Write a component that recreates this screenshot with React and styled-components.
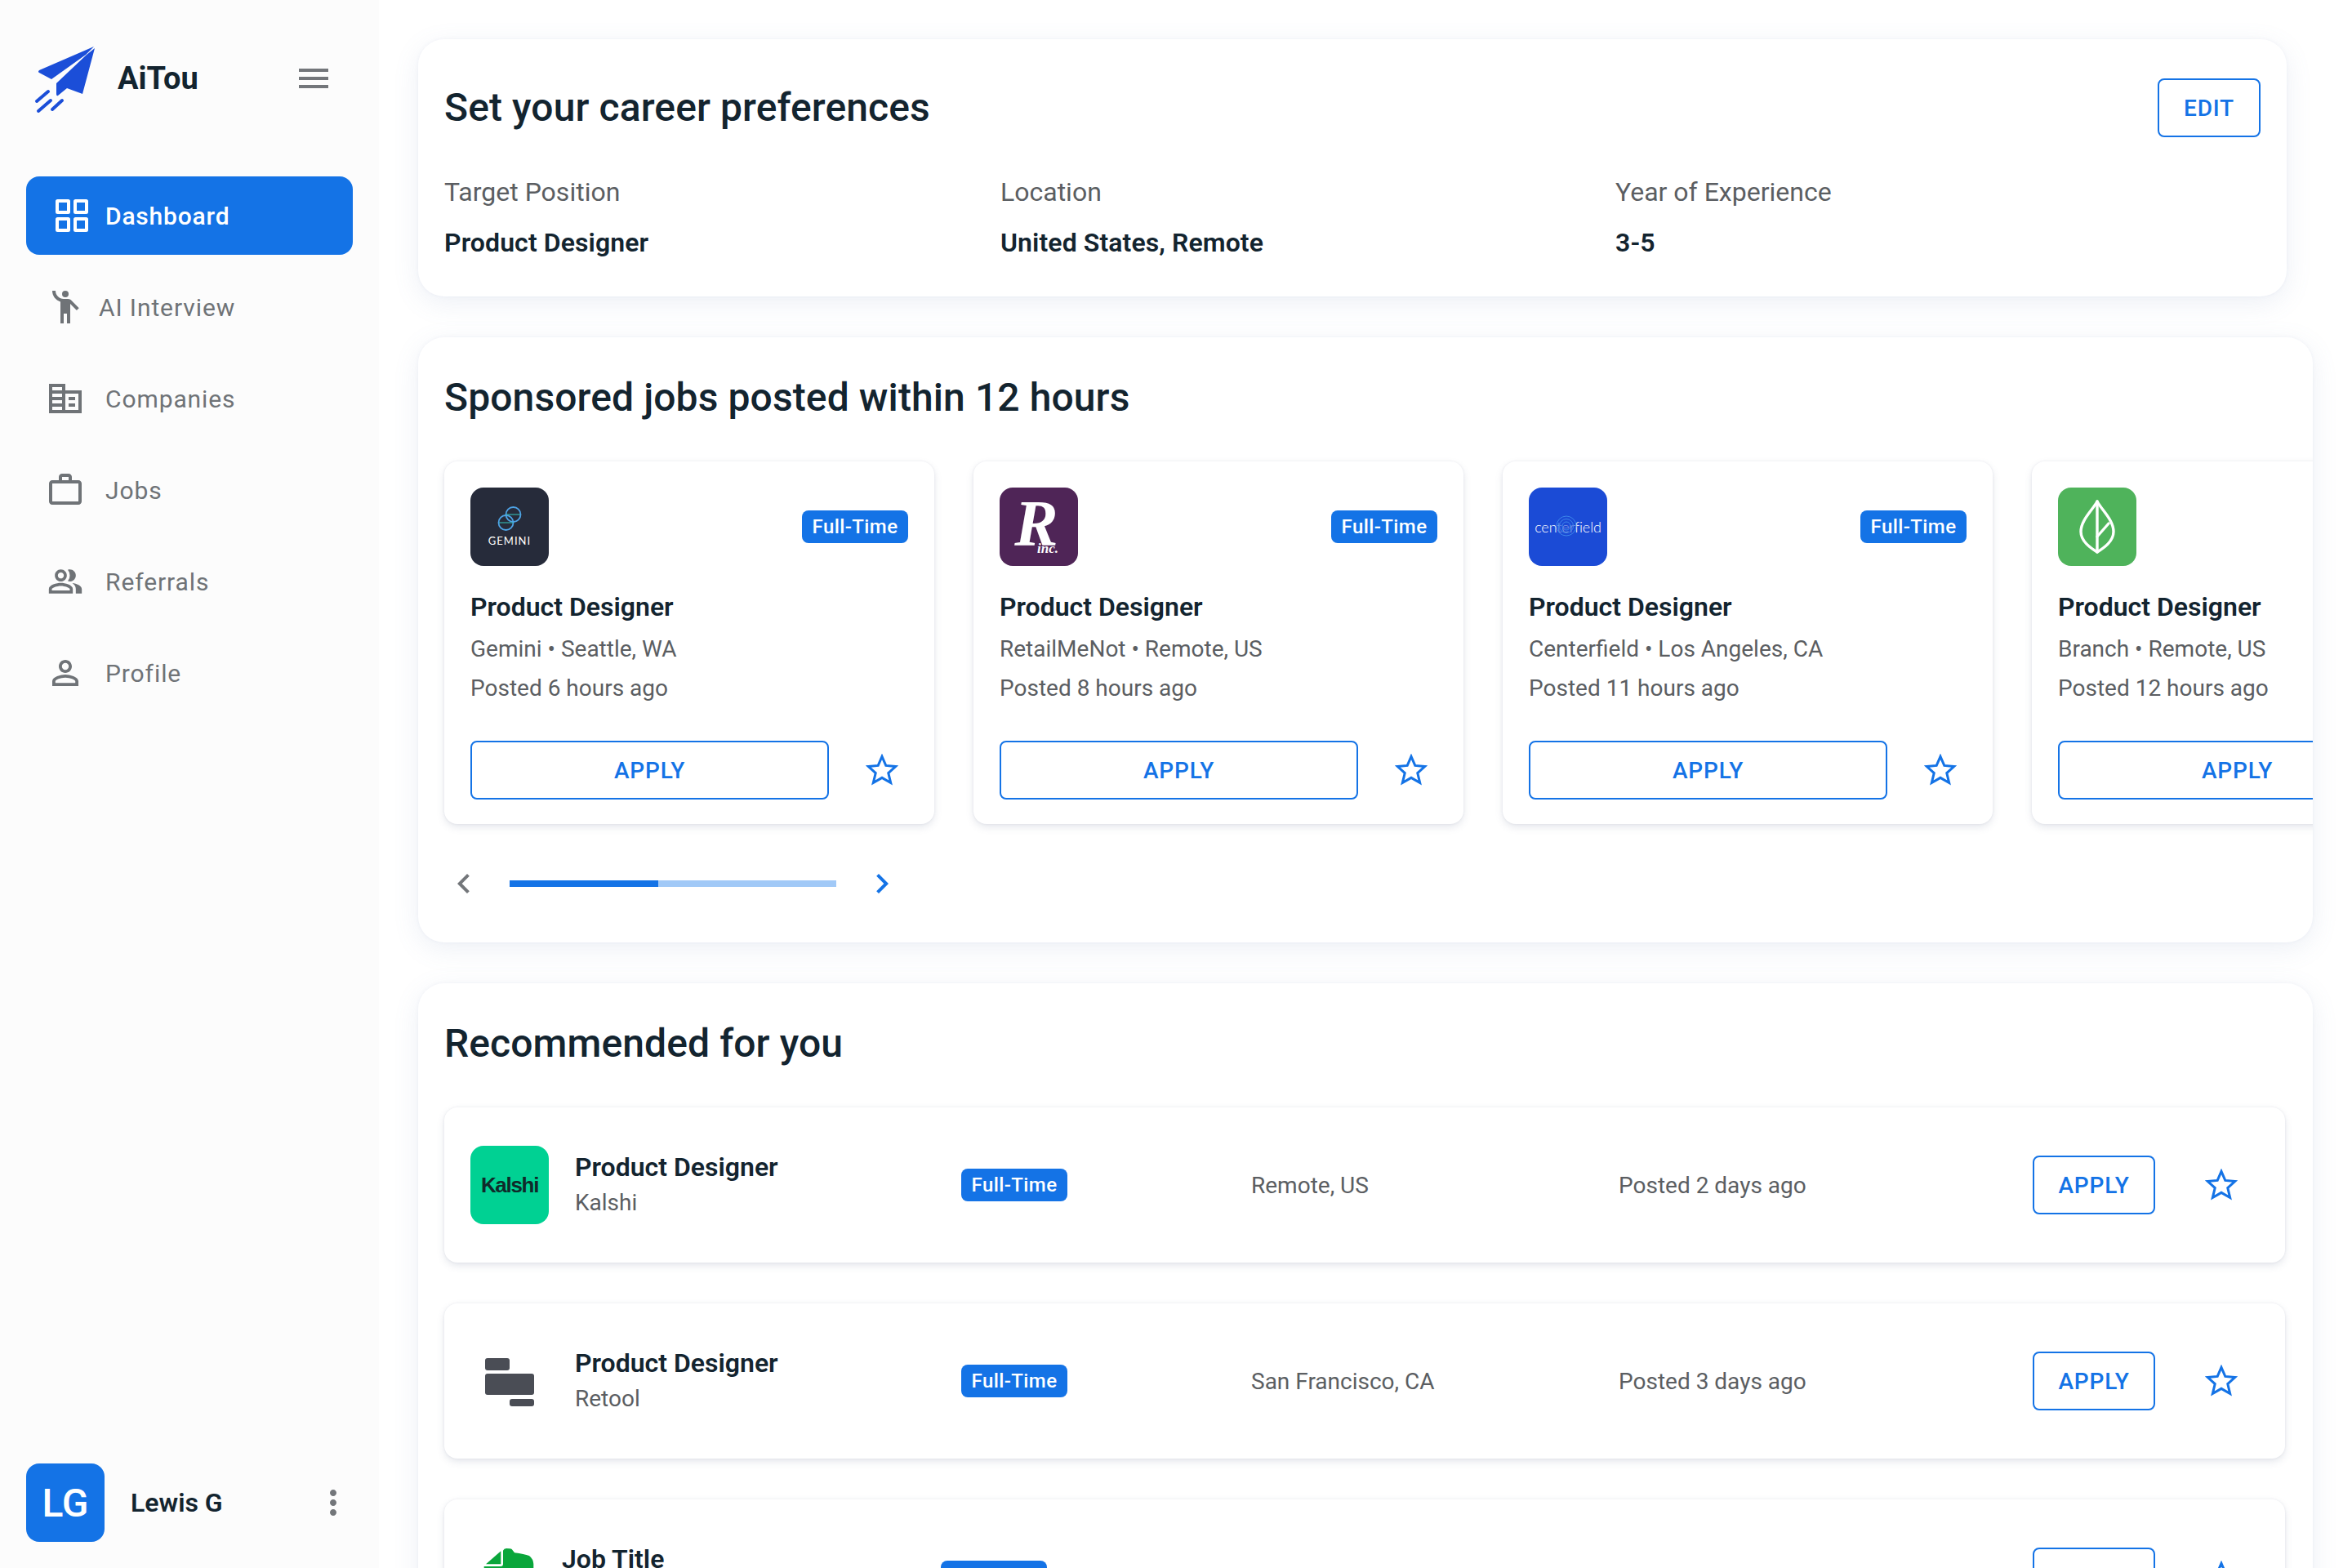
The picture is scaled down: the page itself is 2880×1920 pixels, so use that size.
import React from 'react'
import styled, { createGlobalStyle } from 'styled-components'
import { MdMenu, MdEmojiPeople, MdOutlineWorkOutline, MdOutlinePeopleAlt, MdPersonOutline, MdChevronLeft, MdChevronRight, MdMoreVert } from 'react-icons/md'

const BLUE = '#1473e6'
const INK = '#13242f'
const MUTED = '#5b5e62'

const GlobalStyle = createGlobalStyle`
  html, body { margin: 0; padding: 0; background: #fff; }
  body { font-family: Roboto, "Liberation Sans", sans-serif; color: ${INK}; overflow: hidden; }
  * { box-sizing: border-box; }
`

function PlaneLogo() {
  return (
    <svg width="80" height="90" viewBox="40 50 80 90" fill="#1b4ed8">
      <path d="M115 56 L48 85 Q46 87 48 88 L63 96 L105 66 Z" strokeLinejoin="round" />
      <path d="M116 58 L101 114 L82 107 L71 116 Q69 117 69 114 L69 101 L106 66 Z" />
      <g stroke="#1b4ed8" strokeWidth="4" strokeLinecap="round">
        <path d="M45 123 L59 111" />
        <path d="M47 135 L62 122" />
        <path d="M64 133 L76 122" />
      </g>
    </svg>
  )
}

function GridIcon() {
  return (
    <svg width="40" height="40" viewBox="0 0 40 40" fill="none" stroke="#fff" strokeWidth="4">
      <rect x="2" y="2" width="14" height="14" rx="0.5" />
      <rect x="24" y="2" width="14" height="14" rx="0.5" />
      <rect x="2" y="24" width="14" height="14" rx="0.5" />
      <rect x="24" y="24" width="14" height="14" rx="0.5" />
    </svg>
  )
}

function CompanyIcon() {
  return (
    <svg width="48" height="48" viewBox="0 0 24 24" fill="currentColor">
      <path fillRule="evenodd" d="M2 3h10v4h10v14H2z M4 5h6v2H4z M4 9h6v2H4z M4 13h6v2H4z M4 17h6v2H4z M12 9h8v10h-8z" />
      <rect x="14" y="11" width="4" height="2" />
      <rect x="14" y="15" width="4" height="2" />
    </svg>
  )
}

function StarIcon() {
  return (
    <svg width="40" height="40" viewBox="2 2 36 36" fill="none" stroke={BLUE} strokeWidth="2.7">
      <path d="M20 5 L24.3 15 L35 16 L27 23.2 L29.6 34 L20 28.4 L10.4 34 L13 23.2 L5 16 L15.7 15 Z" />
    </svg>
  )
}

function GeminiLogo() {
  return (
    <LogoBox $bg="#262b3a">
      <svg width="30" height="30" viewBox="0 0 30 30" fill="none" stroke="#4ea3e6" strokeWidth="1.8">
        <circle cx="19.5" cy="10" r="9" />
        <circle cx="10.5" cy="20" r="9" />
        <path d="M10.5 10 H28" stroke="#35c9c0" strokeWidth="1.2" />
        <path d="M2 20 H19.5" stroke="#35c9c0" strokeWidth="1.2" />
      </svg>
      <GeminiName>GEMINI</GeminiName>
    </LogoBox>
  )
}

function RetailLogo() {
  return (
    <LogoBox $bg="#4f2557">
      <RetailMark>R</RetailMark>
      <RetailInc>inc.</RetailInc>
    </LogoBox>
  )
}

function CenterfieldLogo() {
  return (
    <LogoBox $bg="#1b4bd6">
      <CenterName>centerfield</CenterName>
      <CenterRings width="26" height="26" viewBox="0 0 26 26" fill="none" stroke="#3d86ea" strokeWidth="1">
        <circle cx="13" cy="13" r="12" fill="#1b4bd6" fillOpacity="0.55" />
        <circle cx="13" cy="13" r="8.5" />
        <circle cx="13" cy="13" r="5" />
      </CenterRings>
    </LogoBox>
  )
}

function BranchLogo() {
  return (
    <LogoBox $bg="#4fb35b">
      <svg width="96" height="96" viewBox="0 0 96 96" fill="none" stroke="#fff" strokeWidth="3.4" strokeLinejoin="round" strokeLinecap="round">
        <path d="M48 17 C54 28 68 40 68 54 C68 66 56 74 48 79 C40 74 28 66 28 54 C28 40 42 28 48 17 Z" />
        <path d="M48 17 V79" />
        <path d="M48 60 L62 44" />
      </svg>
    </LogoBox>
  )
}

function KalshiLogo() {
  return (
    <LogoBox $bg="#00d193">
      <KalshiName>Kalshi</KalshiName>
    </LogoBox>
  )
}

function RetoolLogo() {
  return (
    <LogoBox>
      <svg width="96" height="96" viewBox="0 0 96 96" fill="#4a4d55">
        <rect x="18" y="20" width="30" height="15" rx="3" />
        <rect x="18" y="39" width="60" height="26" rx="3" />
        <rect x="48" y="70" width="30" height="9" rx="3" />
      </svg>
    </LogoBox>
  )
}

function LeafLogo() {
  return (
    <LogoBox $width={80}>
      <svg width="80" height="96" viewBox="0 0 80 96" fill="#0aa63b">
        <path d="M37.3 16.3 L37.3 32.3 L19 32.3 Z" />
        <path d="M40 15.7 Q41 13 44 13 Q49 13 50.7 14 L54 18.3 Q66 20 72 22 Q77 26 77.3 32 L77.3 90 L16 90 L16.7 35 L37 35 Q40 35 40 32 Z" />
      </svg>
    </LogoBox>
  )
}

const navItems = [
  { label: 'AI Interview', icon: <MdEmojiPeople size={48} />, gap: 17 },
  { label: 'Companies', icon: <CompanyIcon />, gap: 25 },
  { label: 'Jobs', icon: <MdOutlineWorkOutline size={48} />, gap: 25 },
  { label: 'Referrals', icon: <MdOutlinePeopleAlt size={44} />, gap: 25 },
  { label: 'Profile', icon: <MdPersonOutline size={48} />, gap: 25 },
]

const sponsored = [
  { company: 'Gemini', place: 'Seattle, WA', posted: 'Posted 6 hours ago', logo: <GeminiLogo /> },
  { company: 'RetailMeNot', place: 'Remote, US', posted: 'Posted 8 hours ago', logo: <RetailLogo /> },
  { company: 'Centerfield', place: 'Los Angeles, CA', posted: 'Posted 11 hours ago', logo: <CenterfieldLogo /> },
  { company: 'Branch', place: 'Remote, US', posted: 'Posted 12 hours ago', logo: <BranchLogo /> },
]

const recommended = [
  { title: 'Product Designer', company: 'Kalshi', place: 'Remote, US', posted: 'Posted 2 days ago', logo: <KalshiLogo /> },
  { title: 'Product Designer', company: 'Retool', place: 'San Francisco, CA', posted: 'Posted 3 days ago', logo: <RetoolLogo /> },
  { title: 'Job Title', company: 'Company', place: 'Location', posted: 'Posted 4 days ago', logo: <LeafLogo />, compact: true },
]

export default function App() {
  return (
    <Page>
      <GlobalStyle />
      <Sidebar>
        <Brand>
          <BrandMark>
            <PlaneLogo />
            <BrandName>AiTou</BrandName>
          </BrandMark>
          <MenuButton><MdMenu size={48} /></MenuButton>
        </Brand>
        <ActiveNav>
          <GridIcon />
          <span>Dashboard</span>
        </ActiveNav>
        <NavList>
          {navItems.map((item) => (
            <NavItem key={item.label} $gap={item.gap}>
              <IconSlot>{item.icon}</IconSlot>
              <span>{item.label}</span>
            </NavItem>
          ))}
        </NavList>
        <UserBar>
          <Avatar>LG</Avatar>
          <UserName>Lewis G</UserName>
          <MoreButton><MdMoreVert size={48} /></MoreButton>
        </UserBar>
      </Sidebar>

      <Main>
        <PrefCard>
          <PrefHeader>
            <SectionTitle>Set your career preferences</SectionTitle>
            <EditButton>EDIT</EditButton>
          </PrefHeader>
          <PrefGrid>
            <PrefLabel>Target Position</PrefLabel>
            <PrefLabel>Location</PrefLabel>
            <PrefLabel>Year of Experience</PrefLabel>
            <PrefValue>Product Designer</PrefValue>
            <PrefValue>United States, Remote</PrefValue>
            <PrefValue>3-5</PrefValue>
          </PrefGrid>
        </PrefCard>

        <Card>
          <CardTitle>Sponsored jobs posted within 12 hours</CardTitle>
          <JobStrip>
            {sponsored.map((job) => (
              <JobCard key={job.company}>
                <JobTop>
                  {job.logo}
                  <Badge>Full-Time</Badge>
                </JobTop>
                <JobTitle>Product Designer</JobTitle>
                <JobMeta>{job.company} • {job.place}</JobMeta>
                <JobMeta>{job.posted}</JobMeta>
                <JobActions>
                  <WideApply>APPLY</WideApply>
                  <StarSlot><StarIcon /></StarSlot>
                </JobActions>
              </JobCard>
            ))}
          </JobStrip>
          <Pager>
            <PagerArrow $active={false}><MdChevronLeft size={48} /></PagerArrow>
            <PagerTrack><PagerFill style={{ width: '45.5%' }} /></PagerTrack>
            <PagerArrow $active><MdChevronRight size={48} /></PagerArrow>
          </Pager>
        </Card>

        <Card>
          <CardTitle>Recommended for you</CardTitle>
          <RowList>
            {recommended.map((job) => (
              <JobRow key={job.company} $compact={job.compact}>
                {job.logo}
                <RowInfo>
                  <JobTitle as="div" $flat>{job.title}</JobTitle>
                  <RowCompany>{job.company}</RowCompany>
                </RowInfo>
                <BadgeCell><Badge>Full-Time</Badge></BadgeCell>
                <RowText>{job.place}</RowText>
                <RowText>{job.posted}</RowText>
                <RowApply>APPLY</RowApply>
                <RowStar><StarIcon /></RowStar>
              </JobRow>
            ))}
          </RowList>
        </Card>
      </Main>
    </Page>
  )
}

const Page = styled.div`
  display: flex;
  width: 2880px;
  height: 1920px;
  overflow: hidden;
  background: #fff;
`

const Sidebar = styled.aside`
  width: 464px;
  height: 100%;
  flex: none;
  display: flex;
  flex-direction: column;
  padding: 0 32px 32px;
  background: #fcfcfc;
`

const Brand = styled.div`
  height: 192px;
  margin-bottom: 24px;
  display: flex;
  align-items: center;
  justify-content: space-between;
  padding: 0 24px 0 8px;
`

const BrandMark = styled.div`
  display: flex;
  align-items: center;
  gap: 24px;
`

const BrandName = styled.span`
  font-size: 38px;
  font-weight: 700;
  color: ${INK};
`

const MenuButton = styled.div`
  display: flex;
  color: #73767a;
`

const ActiveNav = styled.div`
  height: 96px;
  display: flex;
  align-items: center;
  gap: 21px;
  padding-left: 36px;
  border-radius: 16px;
  background: ${BLUE};
  color: #fff;
  font-size: 30px;
  font-weight: 500;
  letter-spacing: 0.8px;
`

const NavList = styled.nav`
  display: flex;
  flex-direction: column;
  gap: 16px;
  margin-top: 16px;
`

const NavItem = styled.div`
  height: 96px;
  display: flex;
  align-items: center;
  gap: ${(p) => p.$gap}px;
  padding-left: 24px;
  color: #6f7377;
  font-size: 30px;
  letter-spacing: 0.9px;
`

const IconSlot = styled.span`
  width: 48px;
  height: 48px;
  display: flex;
  align-items: center;
  justify-content: center;
`

const UserBar = styled.div`
  margin-top: auto;
  display: flex;
  align-items: center;
`

const Avatar = styled.div`
  width: 96px;
  height: 96px;
  display: flex;
  align-items: center;
  justify-content: center;
  border-radius: 16px;
  background: ${BLUE};
  color: #fff;
  font-size: 48px;
  font-weight: 500;
`

const UserName = styled.div`
  margin-left: 32px;
  font-size: 32px;
  font-weight: 600;
  color: ${INK};
`

const MoreButton = styled.div`
  margin-left: auto;
  display: flex;
  color: #73767a;
`

const Main = styled.main`
  flex: 1;
  min-width: 0;
  display: flex;
  flex-direction: column;
  gap: 50px;
  padding: 48px 48px 0;
`

const Card = styled.section`
  flex: none;
  padding: 48px 0 48px 32px;
  border-radius: 32px;
  background: #fff;
  overflow: hidden;
  box-shadow: 0 8px 32px rgba(110, 130, 180, 0.12), 0 0 4px rgba(110, 130, 180, 0.08);
`

const PrefCard = styled(Card)`
  margin-right: 32px;
  padding: 48px 32px 42px;
`

const PrefHeader = styled.div`
  display: flex;
  align-items: center;
  justify-content: space-between;
  margin-bottom: 43px;
`

const SectionTitle = styled.h2`
  margin: 0;
  font-size: 48px;
  line-height: 52px;
  font-weight: 500;
  letter-spacing: 0.1px;
  color: ${INK};
`

const CardTitle = styled(SectionTitle)`
  margin-bottom: 52px;
`

const OutlineButton = styled.button`
  height: 72px;
  display: flex;
  align-items: center;
  justify-content: center;
  border: 2px solid ${BLUE};
  border-radius: 8px;
  background: #fff;
  color: ${BLUE};
  font-family: inherit;
  font-size: 28px;
  font-weight: 500;
  letter-spacing: 0.8px;
`

const EditButton = styled(OutlineButton)`
  width: 126px;
`

const PrefGrid = styled.div`
  display: grid;
  grid-template-columns: 681px 753px 1fr;
  row-gap: 14px;
`

const PrefLabel = styled.div`
  font-size: 32px;
  line-height: 48px;
  color: ${MUTED};
`

const PrefValue = styled.div`
  font-size: 32px;
  line-height: 48px;
  font-weight: 600;
  letter-spacing: 0.1px;
  color: ${INK};
`

const JobStrip = styled.div`
  display: flex;
  gap: 48px;
`

const JobCard = styled.article`
  flex: none;
  width: 600px;
  height: 444px;
  padding: 32px;
  border-radius: 16px;
  background: #fff;
  box-shadow: 0 4px 10px rgba(100, 110, 140, 0.16), 0 0 3px rgba(100, 110, 140, 0.12);
`

const JobTop = styled.div`
  display: flex;
  align-items: center;
  justify-content: space-between;
  margin-bottom: 30px;
`

const LogoBox = styled.div`
  position: relative;
  flex: none;
  width: ${(p) => p.$width || 96}px;
  height: 96px;
  display: flex;
  flex-direction: column;
  align-items: center;
  justify-content: center;
  border-radius: 16px;
  background: ${(p) => p.$bg || 'transparent'};
  overflow: hidden;
`

const GeminiName = styled.div`
  margin-top: 4px;
  font-family: Lato, sans-serif;
  font-size: 13px;
  line-height: 16px;
  letter-spacing: 1px;
  color: #fff;
`

const RetailMark = styled.div`
  margin: -8px 6px 0 0;
  font-family: "Liberation Serif", serif;
  font-style: italic;
  font-weight: 700;
  font-size: 80px;
  line-height: 90px;
  color: #fff;
`

const RetailInc = styled.div`
  position: absolute;
  right: 24px;
  bottom: 12px;
  font-family: "Liberation Serif", serif;
  font-style: italic;
  font-size: 17px;
  line-height: 18px;
  font-weight: 700;
  color: #fff;
`

const CenterRings = styled.svg`
  position: absolute;
  left: 33px;
  top: 34px;
`

const CenterName = styled.div`
  font-family: Lato, sans-serif;
  font-size: 18px;
  font-weight: 300;
  letter-spacing: -0.1px;
  color: #fff;
`

const KalshiName = styled.div`
  font-family: "Liberation Sans", sans-serif;
  font-size: 26px;
  font-weight: 700;
  letter-spacing: -1.3px;
  color: #0f2a2a;
`

const Badge = styled.span`
  width: 130px;
  height: 40px;
  display: inline-flex;
  align-items: center;
  justify-content: center;
  border-radius: 8px;
  background: ${BLUE};
  color: #fff;
  font-size: 24px;
  font-weight: 500;
  letter-spacing: 0.4px;
`

const JobTitle = styled.h3`
  margin: 0 0 ${(p) => (p.$flat ? 0 : 8)}px;
  font-size: 32px;
  line-height: 40px;
  font-weight: 600;
  color: ${INK};
`

const JobMeta = styled.div`
  font-size: 28px;
  line-height: 48px;
  color: ${MUTED};
`

const JobActions = styled.div`
  display: flex;
  align-items: center;
  margin-top: 40px;
`

const WideApply = styled(OutlineButton)`
  width: 439px;
  flex: none;
`

const StarSlot = styled.div`
  display: flex;
  margin-left: 45px;
`

const Pager = styled.div`
  display: flex;
  align-items: center;
  margin-top: 49px;
  height: 48px;
`

const PagerArrow = styled.div`
  display: flex;
  color: ${(p) => (p.$active ? BLUE : '#73767a')};
`

const PagerTrack = styled.div`
  width: 400px;
  height: 8px;
  margin: 0 32px;
  background: #a1c9f7;
`

const PagerFill = styled.div`
  height: 100%;
  background: ${BLUE};
`

const RowList = styled.div`
  display: flex;
  flex-direction: column;
  gap: 50px;
  padding-right: 34px;
`

const JobRow = styled.article`
  height: 190px;
  display: grid;
  grid-template-columns: ${(p) => (p.$compact ? '112px 464px' : '128px 473px')} 355px 450px 1fr 150px 127px;
  align-items: center;
  padding: 0 32px;
  border-radius: 16px;
  background: #fff;
  box-shadow: 0 4px 10px rgba(100, 110, 140, 0.16), 0 0 3px rgba(100, 110, 140, 0.12);
`

const RowInfo = styled.div`
  display: flex;
  flex-direction: column;
`

const RowCompany = styled.div`
  margin-top: 4px;
  font-size: 28px;
  line-height: 40px;
  color: ${MUTED};
`

const BadgeCell = styled.div`
  display: flex;
`

const RowText = styled.div`
  font-size: 28px;
  color: ${MUTED};
`

const RowApply = styled(OutlineButton)`
  width: 150px;
`

const RowStar = styled.div`
  display: flex;
  margin-left: 61px;
`
